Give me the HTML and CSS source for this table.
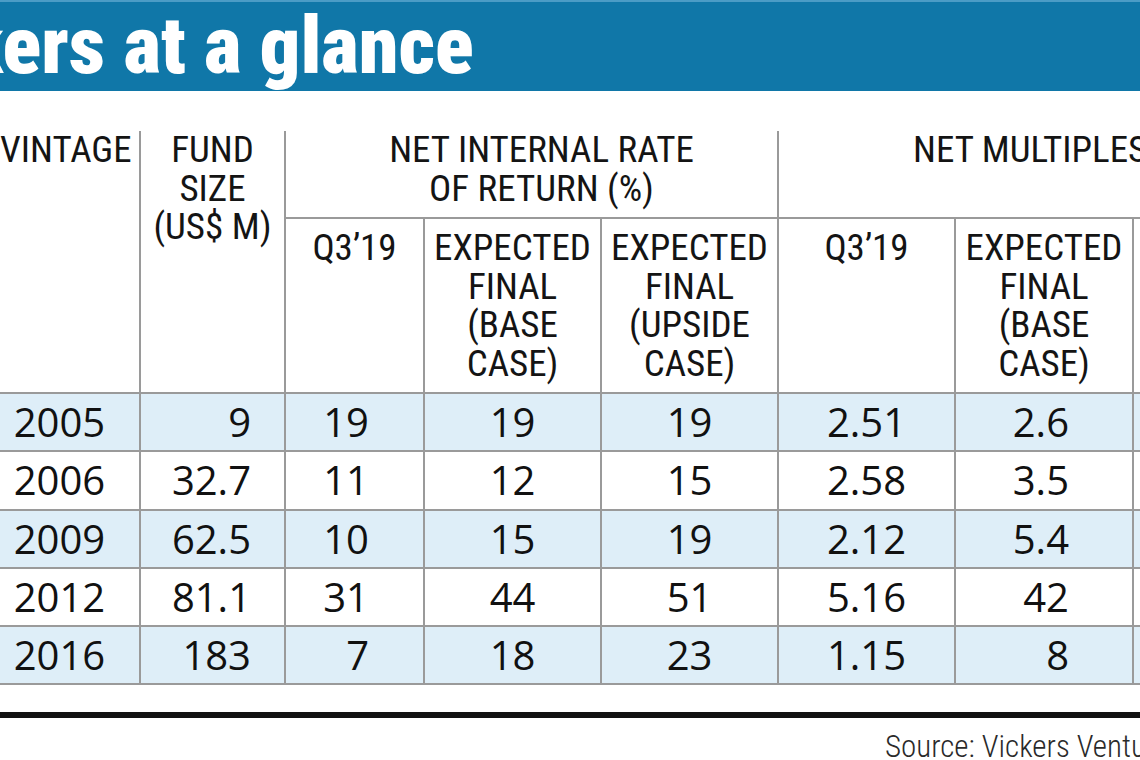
FILE: index.html
```html
<!DOCTYPE html>
<html lang="en">
<head>
<meta charset="utf-8">
<title>Vickers at a glance</title>
<link rel="stylesheet" href="styles.css">
</head>
<body>
<header class="banner">
  <h1 class="banner-title">kers at a glance</h1>
</header>
<table class="stats">
  <colgroup>
    <col class="c-vintage">
    <col class="c-fund">
    <col class="c-q3">
    <col class="c-wide">
    <col class="c-wide">
    <col class="c-wide">
    <col class="c-wide2">
    <col class="c-rest">
  </colgroup>
  <thead>
    <tr class="head-top">
      <th rowspan="2" class="h-vintage">VINTAGE</th>
      <th rowspan="2" class="h-fund">FUND<br>SIZE<br>(US$ M)</th>
      <th colspan="3" class="h-irr">NET INTERNAL RATE<br>OF RETURN (%)</th>
      <th colspan="3" class="h-mult">NET MULTIPLES</th>
    </tr>
    <tr class="head-sub">
      <th>Q3’19</th>
      <th>EXPECTED<br>FINAL<br>(BASE<br>CASE)</th>
      <th>EXPECTED<br>FINAL<br>(UPSIDE<br>CASE)</th>
      <th>Q3’19</th>
      <th>EXPECTED<br>FINAL<br>(BASE<br>CASE)</th>
      <th></th>
    </tr>
  </thead>
  <tbody>
    <tr class="shade"><td>2005</td><td>9</td><td>19</td><td>19</td><td>19</td><td>2.51</td><td>2.6</td><td></td></tr>
    <tr><td>2006</td><td>32.7</td><td>11</td><td>12</td><td>15</td><td>2.58</td><td>3.5</td><td></td></tr>
    <tr class="shade"><td>2009</td><td>62.5</td><td>10</td><td>15</td><td>19</td><td>2.12</td><td>5.4</td><td></td></tr>
    <tr><td>2012</td><td>81.1</td><td>31</td><td>44</td><td>51</td><td>5.16</td><td>42</td><td></td></tr>
    <tr class="shade"><td>2016</td><td>183</td><td>7</td><td>18</td><td>23</td><td>1.15</td><td>8</td><td></td></tr>
  </tbody>
</table>
<div class="rule"></div>
<p class="source">Source: Vickers Ventu</p>
</body>
</html>
```
FILE: styles.css
```css
* {
  box-sizing: border-box;
}

html,
body {
  margin: 0;
  padding: 0;
  background: #ffffff;
}

body {
  width: 1140px;
  height: 760px;
  overflow: hidden;
  font-family: Roboto, "Liberation Sans", Arial, sans-serif;
  font-stretch: condensed;
  color: #141414;
}

/* ---------- banner ---------- */
.banner {
  height: 91px;
  background: #1077a8;
  border-top: 2px solid #4b9cc6;
  overflow: hidden;
}

.banner-title {
  margin: 0;
  padding-top: 4px;
  font-family: Roboto, "Liberation Sans", Arial, sans-serif;
  font-stretch: condensed;
  font-size: 80px;
  line-height: 80px;
  font-weight: 900;
  color: #ffffff;
  white-space: nowrap;
  text-indent: -36px;
}

/* ---------- table ---------- */
.stats {
  margin-top: 40px;
  width: 1140px;
  border-collapse: collapse;
  table-layout: fixed;
}

.c-vintage { width: 140px; }
.c-fund { width: 145px; }
.c-q3 { width: 139px; }
.c-wide { width: 177px; }
.c-wide2 { width: 178px; }
.c-rest { width: 7px; }

.stats th,
.stats td {
  padding: 0;
  border: 2px solid #9a9a9a;
  white-space: nowrap;
}

.stats th {
  font-weight: 400;
  font-size: 37px;
  line-height: 38.5px;
  vertical-align: top;
  text-align: center;
  color: #141414;
}

.head-top th {
  border-top: none;
  height: 87px;
}

.head-sub th {
  height: 175px;
  padding-top: 10px;
}

.stats tr > :first-child {
  border-left: none;
}

.stats tr > :last-child {
  border-right: none;
}

.h-vintage {
  padding-right: 17px !important;
}

.h-irr {
  padding-left: 20px !important;
}

.h-mult {
  text-align: left !important;
  padding-left: 134px !important;
  overflow: hidden;
}

.stats td {
  height: 58.25px;
  font-family: "Open Sans", "Liberation Sans", Arial, sans-serif;
  font-stretch: normal;
  font-size: 40px;
  line-height: 40px;
  vertical-align: middle;
  text-align: center;
  color: #111111;
}

.stats tr.shade td {
  background: #deeef8;
}

.stats td:nth-child(1) {
  padding-right: 20px;
}

.stats td:nth-child(2) {
  text-align: right;
  padding-right: 33px;
}

.stats td:nth-child(3) {
  text-align: right;
  padding-right: 54px;
}

.stats td:nth-child(7) {
  text-align: right;
  padding-right: 63px;
}

/* ---------- footer ---------- */
.rule {
  margin-top: 27px;
  height: 6px;
  background: #111111;
}

.source {
  margin: 12px 0 0;
  padding-left: 885px;
  font-size: 31px;
  line-height: 34px;
  font-weight: 300;
  color: #2a2a2a;
  white-space: nowrap;
  overflow: hidden;
}
```
